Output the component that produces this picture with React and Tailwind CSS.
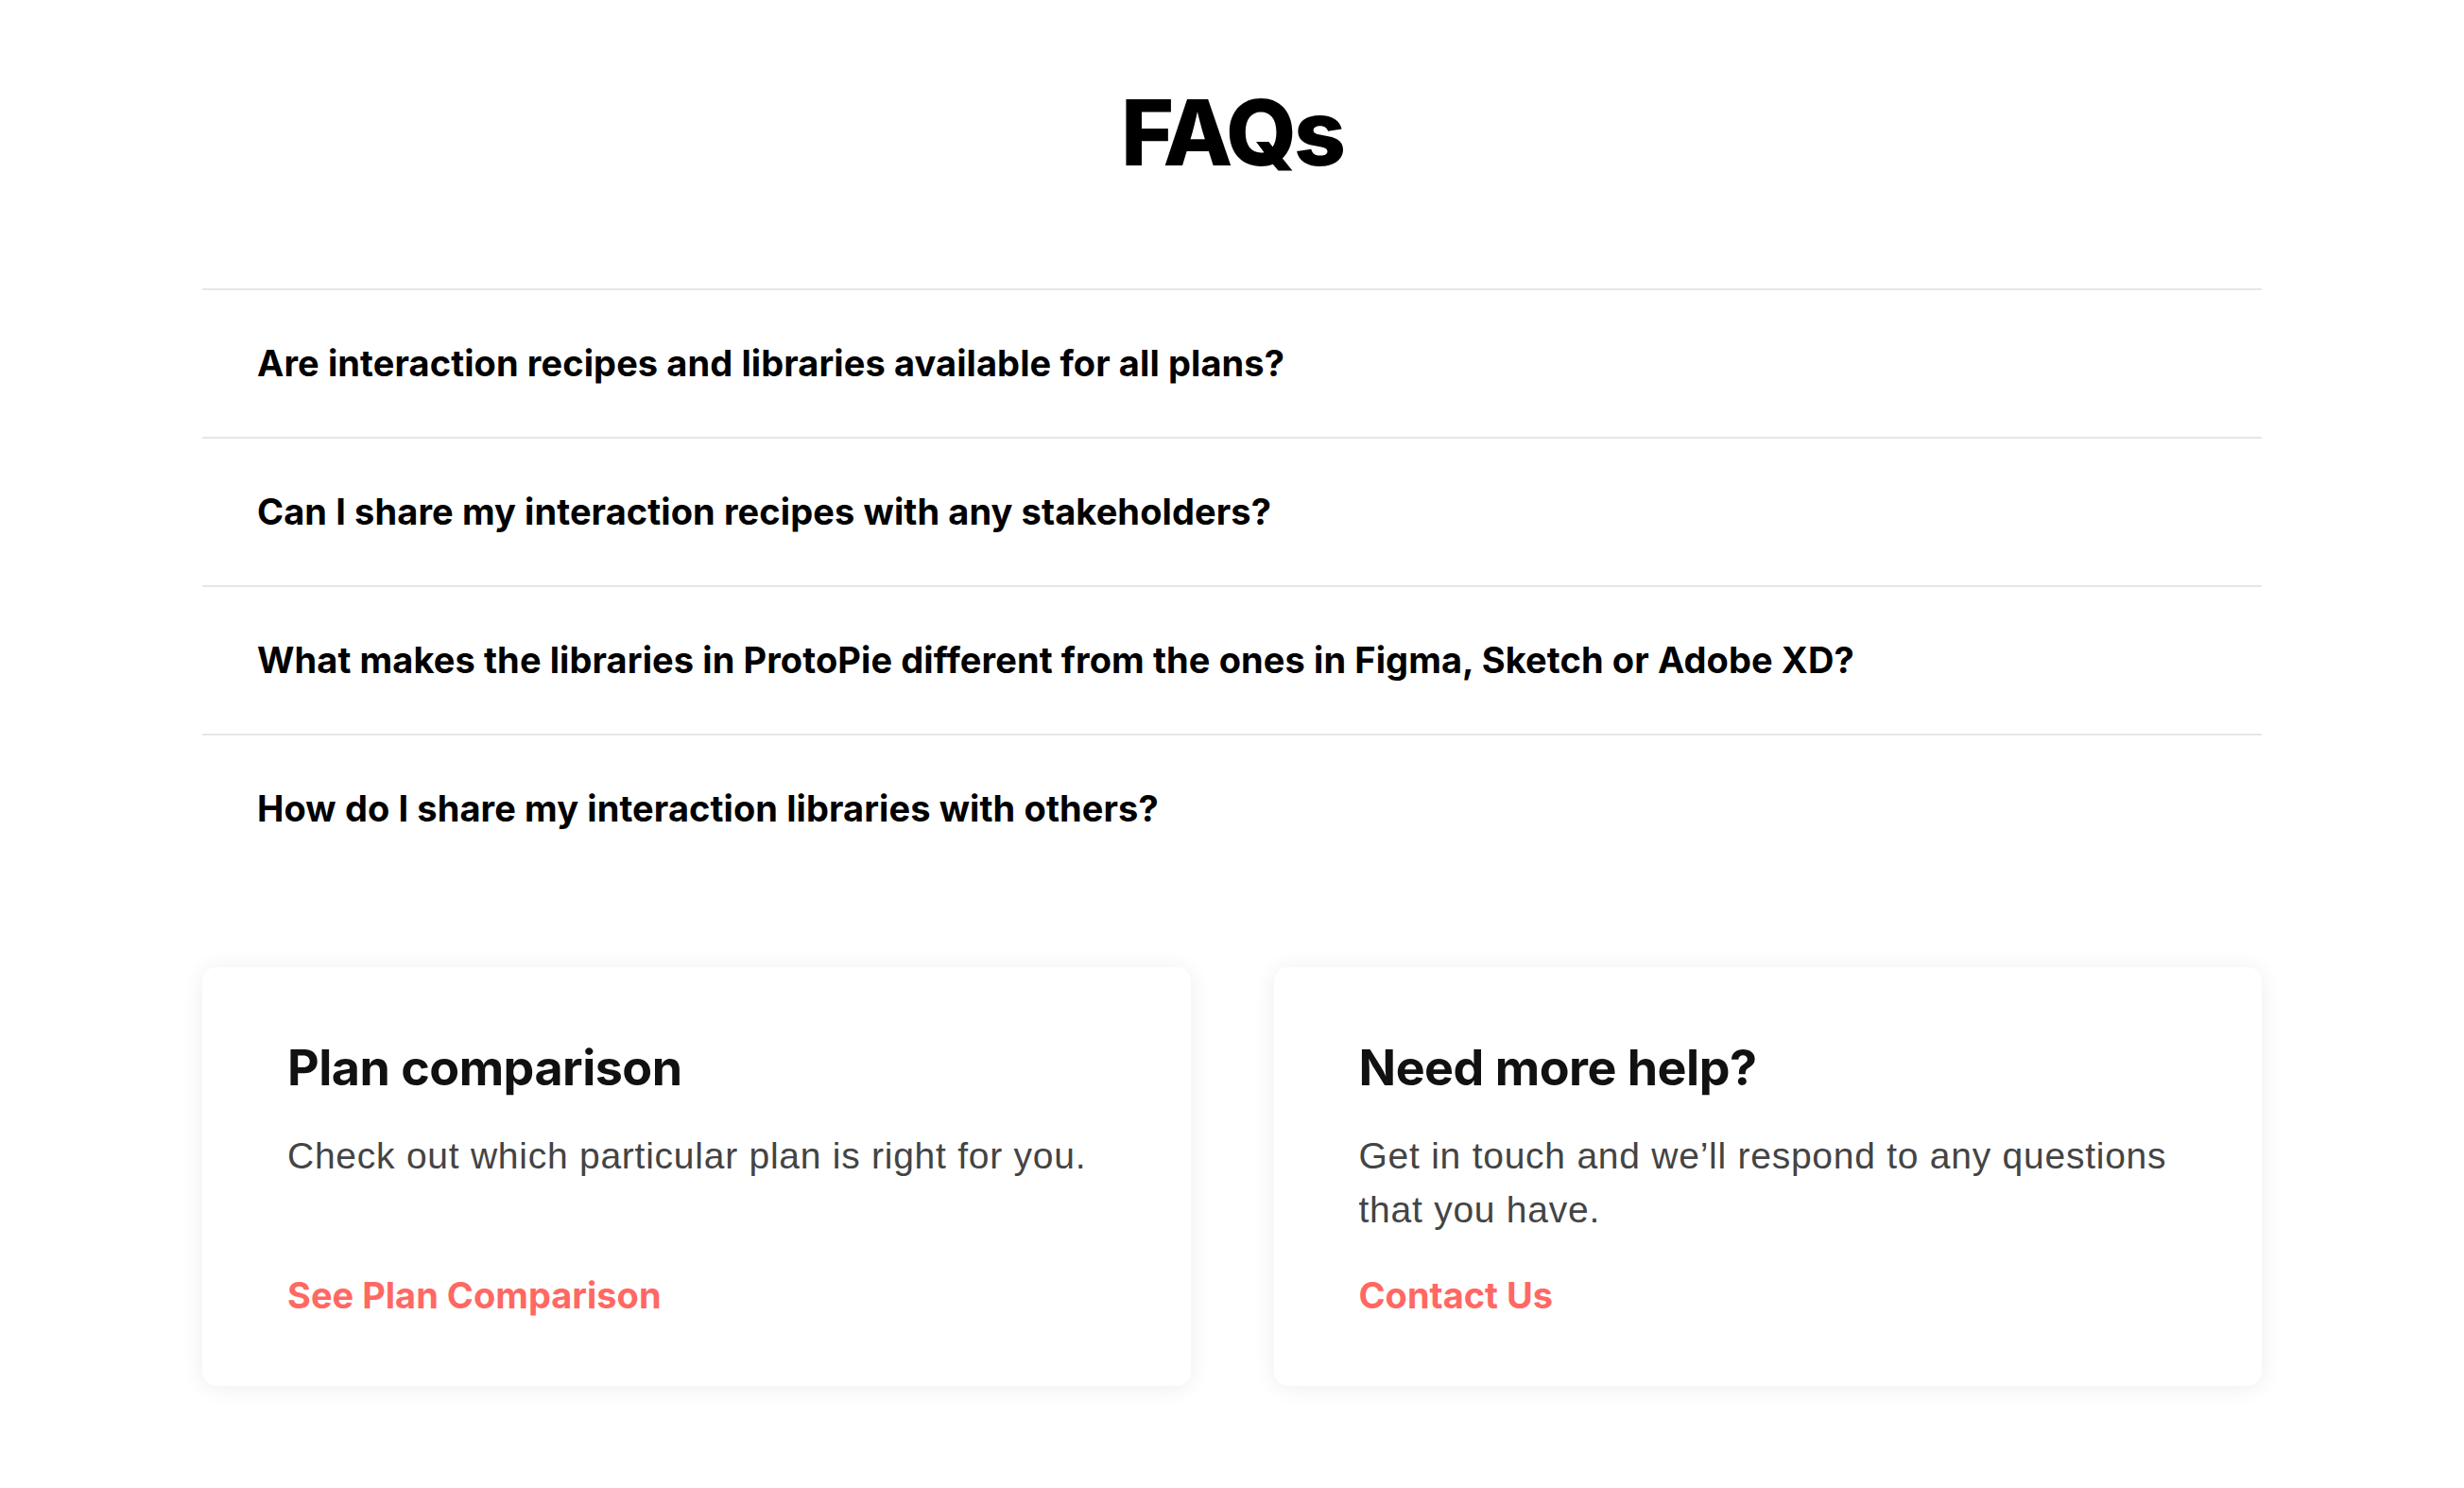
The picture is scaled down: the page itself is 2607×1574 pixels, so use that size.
import React from 'react';

const questions = [
  'Are interaction recipes and libraries available for all plans?',
  'Can I share my interaction recipes with any stakeholders?',
  'What makes the libraries in ProtoPie different from the ones in Figma, Sketch or Adobe XD?',
  'How do I share my interaction libraries with others?',
];

const cards = [
  {
    title: 'Plan comparison',
    body: 'Check out which particular plan is right for you.',
    link: 'See Plan Comparison',
  },
  {
    title: 'Need more help?',
    body: 'Get in touch and we’ll respond to any questions that you have.',
    link: 'Contact Us',
  },
];

const heading = { fontFamily: 'Inter, "Noto Sans", sans-serif' };
const copy = { fontFamily: '"Liberation Sans", Arial, sans-serif' };

export default function App() {
  return (
    <div className="min-h-screen bg-white">
      <div className="mx-auto w-[2179px] pt-[92px] pb-[100px]">
        <h1
          style={heading}
          className="text-center text-[96px] leading-none font-extrabold tracking-[-3px] text-black"
        >
          FAQs
        </h1>

        <div className="mt-[117px]">
          {questions.map((q) => (
            <button
              key={q}
              style={heading}
              className="flex h-[157px] w-full items-center border-t-2 border-[#e6e6e6] pl-[58px] text-left text-[38px] font-bold tracking-[0.1px] text-black"
            >
              {q}
            </button>
          ))}
        </div>

        <div className="mt-[90px] grid grid-cols-2 gap-[88px]">
          {cards.map((card) => (
            <div
              key={card.title}
              className="flex h-[443px] flex-col rounded-[15px] bg-white px-[90px] pt-[76px] pb-[72px] shadow-[0_2px_24px_rgba(0,0,0,0.07)]"
            >
              <h2 style={heading} className="text-[52px] leading-[1.2] font-bold tracking-[-0.5px] text-[#111]">
                {card.title}
              </h2>
              <p
                style={copy}
                className="mt-[33px] flex-1 text-[39px] leading-[57px] tracking-[0.75px] text-[#444]"
              >
                {card.body}
              </p>
              <a href="#" style={heading} className="text-[38px] leading-[1.21] font-bold text-[#ff6863]">
                {card.link}
              </a>
            </div>
          ))}
        </div>
      </div>
    </div>
  );
}
